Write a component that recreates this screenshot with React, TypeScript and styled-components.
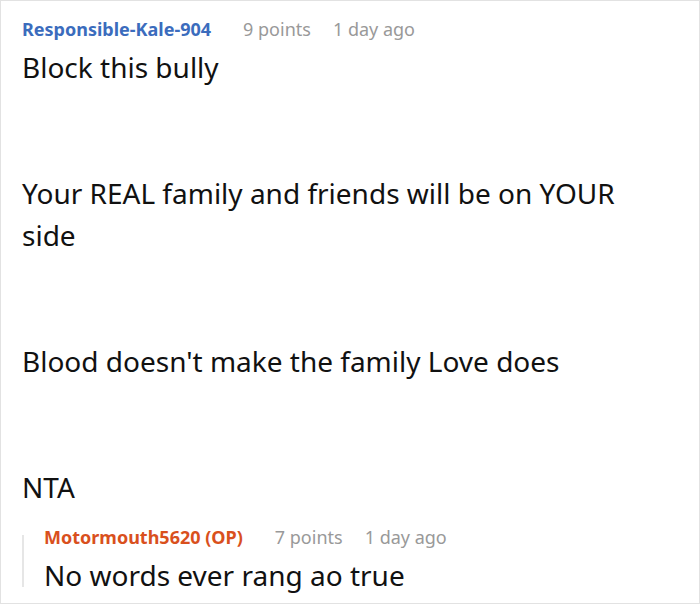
import { createGlobalStyle, styled } from 'styled-components';

interface CommentData {
  author: string;
  isOp?: boolean;
  points: number;
  time: string;
  paragraphs: string[];
}

const topComment: CommentData = {
  author: 'Responsible-Kale-904',
  points: 9,
  time: '1 day ago',
  paragraphs: [
    'Block this bully',
    'Your REAL family and friends will be on YOUR side',
    "Blood doesn't make the family Love does",
    'NTA',
  ],
};

const reply: CommentData = {
  author: 'Motormouth5620 (OP)',
  isOp: true,
  points: 7,
  time: '1 day ago',
  paragraphs: ['No words ever rang ao true'],
};

const GlobalStyle = createGlobalStyle`
  html, body {
    margin: 0;
    padding: 0;
    background: #ffffff;
  }
`;

const CommentHeader = ({ comment }: { comment: CommentData }) => (
  <Header>
    <Author $op={comment.isOp}>{comment.author}</Author>
    <Points>{comment.points} points</Points>
    <Time>{comment.time}</Time>
  </Header>
);

const App = () => {
  return (
    <>
      <GlobalStyle />
      <Card>
        <CommentHeader comment={topComment} />
        <Body>
          {topComment.paragraphs.map((text, index) => (
            <Paragraph key={index} $last={index === topComment.paragraphs.length - 1}>
              {text}
            </Paragraph>
          ))}
        </Body>
        <Reply>
          <CommentHeader comment={reply} />
          <Body>
            {reply.paragraphs.map((text, index) => (
              <Paragraph key={index} $last>
                {text}
              </Paragraph>
            ))}
          </Body>
        </Reply>
      </Card>
    </>
  );
};

const Card = styled.div`
  box-sizing: border-box;
  width: 700px;
  height: 604px;
  overflow: hidden;
  border: 1px solid #e2e2e2;
  padding: 16px 38px 0 21px;
  font-family: 'Noto Sans', 'Open Sans', sans-serif;
  color: #111111;
`;

const Header = styled.div`
  display: flex;
  flex-direction: row;
  align-items: baseline;
  height: 24px;
  line-height: 24px;
  font-size: 18px;
  white-space: nowrap;
`;

const Author = styled.span<{ $op?: boolean }>`
  font-weight: bold;
  color: ${(p) => (p.$op ? '#d9501d' : '#3b6cbd')};
`;

const Points = styled.span`
  color: #999999;
  margin-left: 32px;
`;

const Time = styled.span`
  color: #999999;
  margin-left: 22px;
`;

const Body = styled.div`
  margin-top: 5px;
  font-size: 28px;
  line-height: 42px;
`;

const Paragraph = styled.p<{ $last?: boolean }>`
  margin: 0 0 ${(p) => (p.$last ? '0' : '84px')};
`;

const Reply = styled.div`
  position: relative;
  margin-top: 17px;
  padding-left: 22px;

  &::before {
    content: '';
    position: absolute;
    left: 0;
    top: 10px;
    bottom: 9px;
    width: 2px;
    background: #e6e6e6;
  }
`;

export default App;
